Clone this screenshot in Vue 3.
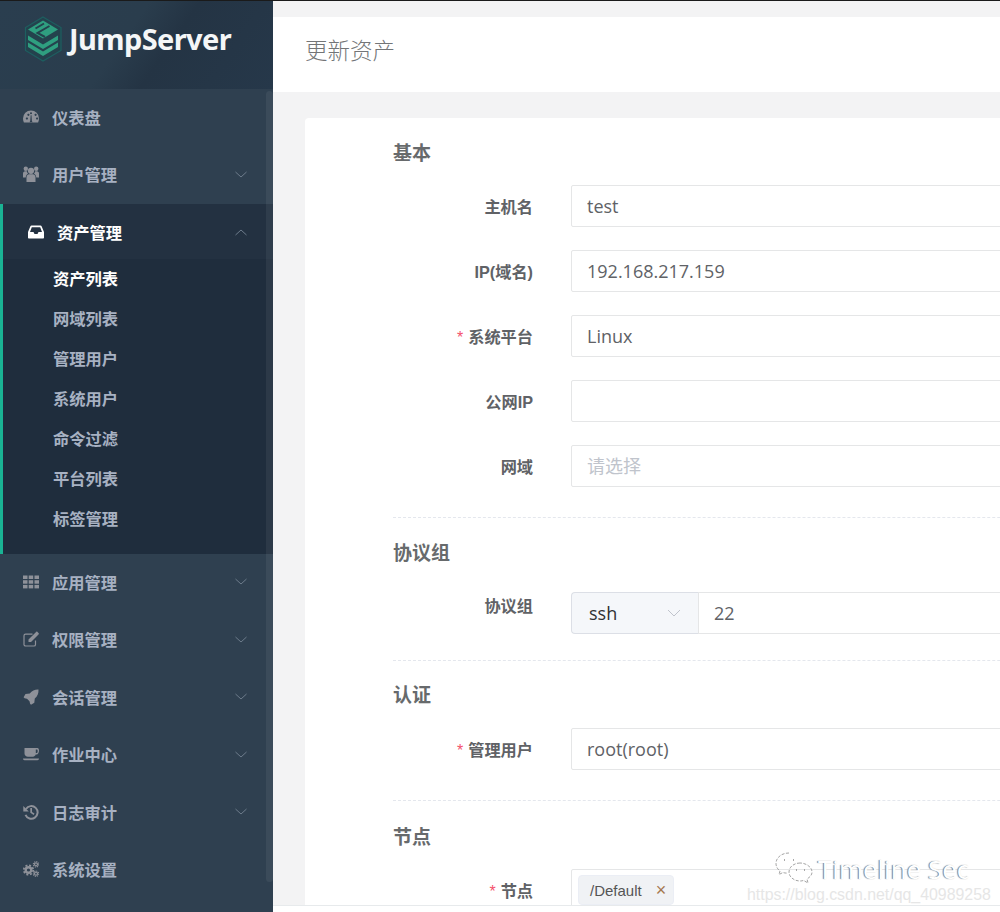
<template>
  <div class="layout">
    <aside class="sidebar">
      <div class="logo">
        <svg class="logo-mark" width="40" height="46" viewBox="0 0 40 46">
          <path d="M19 1 37 11.500v23L19 45 1.500 34.500v-23z" fill="#24424d" stroke="#1d5f60" stroke-width="1.200" />
          <path d="M19 4.500 34 13.500 19 22.500 4 13.500z" fill="#2f9f80" />
          <path d="M11.500 12.500 20 7.500M25.500 10 13.500 17 21 21" fill="none" stroke="#24424d" stroke-width="2" />
          <path d="M4 19.500 19 28.500 34 19.500v4.500L19 33 4 24z" fill="#2f9f80" />
          <path d="M4 26.500 19 35.500 34 26.500v4.500L19 40 4 31z" fill="#2f9f80" />
        </svg>
        <span class="logo-text">JumpServer</span>
      </div>

      <nav class="menu">
        <div v-for="item in menu" :key="item.name" class="group" :class="{ open: item.children }">
          <div class="item">
            <svg class="icon" width="16" height="16" viewBox="0 0 16 16" v-html="icons[item.icon]"></svg>
            <span class="name">{{ item.name }}</span>
            <svg v-if="item.arrow" class="arrow" width="12" height="7" viewBox="0 0 12 7">
              <path :d="item.children ? 'M.5 6 6 1l5.500 5' : 'M.5 1 6 6l5.500-5'" fill="none" stroke="currentColor" />
            </svg>
          </div>
          <div v-if="item.children" class="sub">
            <div v-for="(sub, i) in item.children" :key="sub" class="sub-item" :class="{ current: i === 0 }">{{ sub }}</div>
          </div>
        </div>
      </nav>
      <div class="scroll-thumb"></div>
    </aside>

    <main class="main">
      <div class="page-head">更新资产</div>
      <div class="content">
        <div class="card">
          <h3 class="title first-title">基本</h3>
          <div v-for="f in basic" :key="f.label" class="row">
            <label class="label"><i v-if="f.required">*</i>{{ f.label }}</label>
            <input class="input" readonly :value="f.value" :placeholder="f.placeholder" />
          </div>

          <div class="divider"></div>
          <h3 class="title proto-title">协议组</h3>
          <div class="row proto-row">
            <label class="label proto-label">协议组</label>
            <div class="proto">
              <div class="proto-select">
                <span>ssh</span>
                <svg width="14" height="8" viewBox="0 0 14 8"><path d="M1 1l6 6 6-6" fill="none" stroke="#c0c4cc" /></svg>
              </div>
              <input class="input proto-port" readonly value="22" />
            </div>
          </div>

          <div class="divider"></div>
          <h3 class="title auth-title">认证</h3>
          <div class="row auth-row">
            <label class="label"><i>*</i>管理用户</label>
            <input class="input" readonly value="root(root)" />
          </div>

          <div class="divider"></div>
          <h3 class="title node-title">节点</h3>
          <div class="row">
            <label class="label"><i>*</i>节点</label>
            <div class="input tags">
              <span class="tag">/Default<b>×</b></span>
            </div>
          </div>
        </div>
      </div>
      <div class="foot"></div>
    </main>

    <div class="mark">
      <svg width="38" height="33" viewBox="0 0 38 33" fill="none" stroke="#8d8d8d" stroke-width=".8" stroke-dasharray="3 1.500">
        <path d="M14 1C6 1 1 6 1 11.500c0 3.500 2 6 4 7.500l-1 3.500 4-2c1 .4 2.500.6 4 .6" />
        <path d="M25 11c-6 0-11 4-11 9s5 9 11 9c1.500 0 2.500-.2 3.500-.6L33 31l-1-4c3-2 5-4 5-7 0-5-6-9-12-9z" />
        <path d="M9 8h1M18 8h1M21 18h1M29 18h1" stroke-width="1.500" stroke-dasharray="none" />
      </svg>
      <span class="mark-name">Timeline Sec</span>
      <span class="mark-url">https://blog.csdn.net/qq_40989258</span>
    </div>
  </div>
</template>

<script setup>
const icons = {
  dashboard:
    '<path fill="currentColor" fill-rule="evenodd" d="M8 1.500A8 8 0 0 0 0 9.500c0 1.500.3 2.800.9 4h14.200c.6-1.200.9-2.500.9-4A8 8 0 0 0 8 1.500zM2.800 9.500a1.100 1.100 0 1 1 0 .01zM4.300 5.800a1.100 1.100 0 1 1 0 .01zM7 4.300a1 1 0 1 1 2 0 1 1 0 0 1-2 0zM11.500 5.800a1.100 1.100 0 1 1 0 .01zM13 9.500a1.100 1.100 0 1 1 0 .01zM7.200 12 7.700 6.300h.8l.4 5.700a1.200 1.200 0 1 1-1.700 0z"/>',
  users:
    '<g fill="currentColor"><circle cx="8" cy="4.800" r="3.100"/><circle cx="2.800" cy="2.800" r="2.200"/><circle cx="13.200" cy="2.800" r="2.200"/><path d="M3.500 16v-4.500C3.500 9.500 5 8.300 6 8.300h4c1 0 2.500 1.200 2.500 3.200V16z"/><path d="M0 11.500V7.500c0-1.200 1-2.200 2-2.200h1.900c.2 1 .6 1.900 1.200 2.500-1.300.6-2.200 1.800-2.400 3.700zM16 11.500V7.500c0-1.200-1-2.200-2-2.200h-1.900c-.2 1-.6 1.900-1.200 2.500 1.300.6 2.200 1.800 2.400 3.700z"/></g>',
  inbox:
    '<path fill="currentColor" fill-rule="evenodd" d="M3.500 1.500h9c.5 0 .9.300 1.100.7L16 8v5.500c0 .6-.5 1-1 1H1c-.5 0-1-.4-1-1V8l2.400-5.800c.2-.4.600-.7 1.100-.7zM3.800 3.300 2 8h3.500l1 2h3l1-2H14l-1.800-4.700z"/>',
  th:
    '<g fill="currentColor"><rect x="0" y="1.500" width="4.500" height="3.500"/><rect x="5.700" y="1.500" width="4.500" height="3.500"/><rect x="11.500" y="1.500" width="4.500" height="3.500"/><rect x="0" y="6.200" width="4.500" height="3.500"/><rect x="5.700" y="6.200" width="4.500" height="3.500"/><rect x="11.500" y="6.200" width="4.500" height="3.500"/><rect x="0" y="10.900" width="4.500" height="3.500"/><rect x="5.700" y="10.900" width="4.500" height="3.500"/><rect x="11.500" y="10.900" width="4.500" height="3.500"/></g>',
  edit:
    '<path fill="none" stroke="currentColor" stroke-width="1.200" d="M12.500 9.500v3.900c0 1-.8 1.600-1.600 1.600H2.600c-.9 0-1.600-.7-1.600-1.600V4.700c0-.9.700-1.600 1.600-1.600h6.900"/><path fill="currentColor" d="M5.500 8.500 12.600 1.500l2.400 2.400-7 7.100H5.500zM13.300.8c.3-.3.700-.3 1 0l1.400 1.400c.3.300.3.700 0 1l-.7.700-2.400-2.400z"/>',
  rocket:
    '<path fill="currentColor" d="M15.500.5c.2 3.800-.9 6.800-3.700 9l-.5 4.300-3.300 2-.9-1.100-.6-2.400-2.500-2.500-2.400-.6-1-.9L2.500 5l4.300-.5C9 1.800 12 .3 15.500.5z"/>',
  coffee:
    '<path fill="currentColor" fill-rule="evenodd" d="M1.500 2h13c.9 0 1.500 1 1.500 2.700S15 8.500 13.500 8.500h-.8c-.5 1.400-1.500 2.200-2.700 2.200H5C3 10.700 1.500 9.200 1.500 7.500zM12.800 3.500v3.500h.7c.8 0 1.200-.8 1.200-1.800s-.3-1.700-1-1.700zM0 12.500h16c0 1-.7 1.700-1.500 1.700h-13C.7 14.200 0 13.500 0 12.500z"/>',
  history:
    '<path fill="none" stroke="currentColor" stroke-width="2" d="M3 5A6.300 6.300 0 1 1 2.500 10.800"/><path fill="currentColor" d="M.3 2v5.500h5.500zM7.300 4h1.700v4l2.500 1.500-.8 1.400-3.400-2.100z"/>',
  cogs:
    '<g fill="none" stroke="currentColor"><circle cx="5.500" cy="9" r="2.800" stroke-width="2.400"/><circle cx="5.500" cy="9" r="4.700" stroke-width="1.800" stroke-dasharray="2 1.690"/><circle cx="13" cy="3.300" r="1.500" stroke-width="1.300"/><circle cx="13" cy="3.300" r="2.700" stroke-width="1.100" stroke-dasharray="1.200 .9"/><circle cx="13" cy="12.700" r="1.500" stroke-width="1.300"/><circle cx="13" cy="12.700" r="2.700" stroke-width="1.100" stroke-dasharray="1.200 .9"/></g>',
}

const menu = [
  { name: "仪表盘", icon: "dashboard" },
  { name: "用户管理", icon: "users", arrow: true },
  {
    name: "资产管理",
    icon: "inbox",
    arrow: true,
    children: ["资产列表", "网域列表", "管理用户", "系统用户", "命令过滤", "平台列表", "标签管理"],
  },
  { name: "应用管理", icon: "th", arrow: true },
  { name: "权限管理", icon: "edit", arrow: true },
  { name: "会话管理", icon: "rocket", arrow: true },
  { name: "作业中心", icon: "coffee", arrow: true },
  { name: "日志审计", icon: "history", arrow: true },
  { name: "系统设置", icon: "cogs" },
]

const basic = [
  { label: "主机名", value: "test" },
  { label: "IP(域名)", value: "192.168.217.159" },
  { label: "系统平台", value: "Linux", required: true },
  { label: "公网IP", value: "" },
  { label: "网域", value: "", placeholder: "请选择" },
]
</script>

<style>
html,
body {
  margin: 0;
  overflow: hidden;
}
</style>

<style scoped>
.layout {
  position: relative;
  display: flex;
  height: 911px;
  width: 1000px;
  overflow: hidden;
  border-top: 1px solid #1a1a1a;
  font-family: "Liberation Sans", "Noto Sans CJK SC", sans-serif;
  background: #f3f3f4;
}

.sidebar {
  position: relative;
  flex: 0 0 273px;
  background: #2f4050;
}

.logo {
  display: flex;
  align-items: center;
  gap: 5px;
  height: 88px;
  padding: 0 0 13px 24px;
  box-sizing: border-box;
  background: linear-gradient(125deg, #2a3e4f 0%, #2a3d4d 45%, #243444 60%, #26384a 100%);
}

.logo-text {
  font-family: "Noto Sans", sans-serif;
  font-size: 29px;
  font-weight: 700;
  letter-spacing: -0.6px;
  color: #f4f6f7;
}

.item {
  display: flex;
  align-items: center;
  height: 57.5px;
  padding-left: 23px;
  padding-bottom: 2px;
  color: #8e9199;
  box-sizing: border-box;
}

.name {
  margin-left: 13px;
  font-size: 16.300px;
  font-weight: 700;
  color: #a7b1c2;
}

.arrow {
  margin-left: auto;
  margin-right: 26px;
  color: #6d7c8b;
}

.open {
  border-left: 3px solid #1ab394;
  background: #1f2d3d;
  padding-bottom: 15px;
}

.open .item {
  height: 55px;
  padding-top: 3px;
  padding-left: 25px;
  background: #233141;
  color: #fff;
}

.open .name {
  color: #fff;
}

.sub-item {
  height: 40px;
  line-height: 40px;
  padding-left: 50px;
  font-size: 16.300px;
  font-weight: 700;
  color: #a7b1c2;
}

.sub-item.current {
  color: #fff;
}

.scroll-thumb {
  position: absolute;
  top: 90px;
  right: 0;
  width: 7px;
  height: 791px;
  border-radius: 4px;
  background: rgba(255, 255, 255, 0.06);
}

.main {
  flex: 1;
  min-width: 0;
  display: flex;
  flex-direction: column;
  padding-top: 16px;
}

.page-head {
  flex: 0 0 75px;
  line-height: 70px;
  padding-left: 32px;
  font-size: 22.500px;
  font-weight: 300;
  color: #737577;
  background: #fff;
}

.content {
  flex: 1;
  min-height: 0;
  overflow: hidden;
  padding: 26px 0 0 32px;
}

.card {
  width: 900px;
  height: 900px;
  box-sizing: border-box;
  padding: 20px 0 0 88px;
  background: #fff;
  border-radius: 4px;
}

.title {
  margin: 0 0 19px;
  font-size: 19px;
  line-height: 28px;
  font-weight: 700;
  color: #676a6c;
}

.first-title {
  padding-top: 2px;
  margin-bottom: 17px;
}

.row {
  display: flex;
  align-items: center;
  margin-bottom: 23px;
}

.label {
  flex: 0 0 140px;
  margin-right: 38px;
  text-align: right;
  font-size: 16.200px;
  font-weight: 700;
  color: #606266;
}

.label i {
  margin-right: 5px;
  font-style: normal;
  font-weight: 400;
  font-size: 16px;
  color: #f4516c;
}

.input {
  flex: 1;
  min-width: 0;
  height: 42px;
  box-sizing: border-box;
  padding: 0 15px;
  border: 1px solid #e5e6e7;
  border-radius: 2px;
  outline: none;
  font: 18px "Open Sans", "Noto Sans CJK SC", sans-serif;
  color: #606266;
  background: #fff;
}

.input::placeholder {
  color: #c0c4cc;
}

.divider {
  margin: 30px 0 21px;
  border-top: 1px dashed #e4e7ed;
}

.proto-title {
  padding-top: 1px;
  margin-bottom: 24px;
}

.proto-row {
  margin-bottom: -4px;
}

.proto-label {
  align-self: flex-start;
  margin-top: 1px;
}

.proto {
  flex: 1;
  display: flex;
  min-width: 0;
}

.proto-select {
  flex: 0 0 127px;
  height: 42px;
  box-sizing: border-box;
  display: flex;
  align-items: center;
  justify-content: space-between;
  padding: 0 17px;
  font: 18px "Open Sans", sans-serif;
  color: #303133;
  background: #f5f7fa;
  border: 1px solid #dcdfe6;
  border-right: 0;
  border-radius: 4px 0 0 4px;
}

.proto-port {
  border-radius: 0;
  border-color: #e5e6e7;
}

.auth-title {
  margin-bottom: 18px;
}

.auth-row {
  margin-bottom: 0;
}

.node-title {
  padding-top: 2px;
  margin-bottom: 17px;
}

.tags {
  display: flex;
  align-items: center;
  padding: 0 6px;
}

.tag {
  display: flex;
  align-items: center;
  height: 30px;
  padding: 0 7px 0 11px;
  font: 15px "Liberation Sans", sans-serif;
  color: #555;
  background: #f0f2f5;
  border: 1px solid #ebeef5;
  box-sizing: border-box;
  border-radius: 4px;
}

.tag b {
  margin-left: 14px;
  font-size: 18px;
  line-height: 18px;
  font-weight: 400;
  color: #a5784f;
}

.foot {
  flex: 0 0 6px;
  background: #fff;
  border-top: 1px solid #e7eaec;
}

.mark {
  position: absolute;
  left: 747px;
  top: 851px;
  width: 253px;
  height: 54px;
  pointer-events: none;
}

.mark svg {
  position: absolute;
  left: 28px;
  top: 0;
}

.mark-name {
  position: absolute;
  left: 71px;
  top: 3px;
  font-family: "Open Sans", sans-serif;
  font-size: 26px;
  line-height: 29px;
  white-space: nowrap;
  color: #fff;
  text-shadow: -1px 0 1px #777;
}

.mark-url {
  position: absolute;
  left: 0;
  top: 33px;
  font-size: 15.900px;
  line-height: 19px;
  white-space: nowrap;
  color: #e6e6e6;
}
</style>
